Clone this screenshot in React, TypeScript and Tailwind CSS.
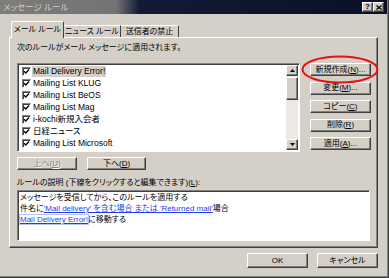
import React from 'react';

const raised =
  'bg-[#d4d0c8] border border-t-white border-l-white border-r-[#404040] border-b-[#404040] shadow-[inset_-1px_-1px_0_#808080]';
const sunken =
  'border border-t-[#808080] border-l-[#808080] border-r-white border-b-white shadow-[inset_1px_1px_0_#404040]';

const rules = [
  'Mail Delivery Error!',
  'Mailing List KLUG',
  'Mailing List BeOS',
  'Mailing List Mag',
  'i-kochi新規入会者',
  '日経ニュース',
  'Mailing List Microsoft',
  '部外者',
];

const Button = ({
  children,
  className = '',
  disabled = false,
}: {
  children: React.ReactNode;
  className?: string;
  disabled?: boolean;
}) => (
  <div
    className={`${raised} flex items-center justify-center leading-none whitespace-nowrap ${
      disabled ? 'text-[#808080] [text-shadow:1px_1px_0_#ffffff]' : 'text-black'
    } ${className}`}
  >
    {children}
  </div>
);

const Check = () => (
  <div className={`${sunken} w-[9px] h-[9px] bg-white flex items-center justify-center shrink-0`}>
    <svg width="7" height="7" viewBox="0 0 7 7">
      <path d="M1 3.2 L2.8 5 L6 1.6" stroke="#000" strokeWidth="1.4" fill="none" />
    </svg>
  </div>
);

const Arrow = ({ up }: { up?: boolean }) => (
  <div className={`${raised} w-[12px] h-[11px] flex items-center justify-center shrink-0`}>
    <svg width="5" height="3" viewBox="0 0 5 3">
      <path d={up ? 'M0 3 L2.5 0 L5 3 Z' : 'M0 0 L2.5 3 L5 0 Z'} fill="#000" />
    </svg>
  </div>
);

export default function App() {
  return (
    <div className="relative w-[389px] h-[278px] overflow-hidden border-r border-b border-[#404040] bg-[#d4d0c8] font-['Liberation_Sans','Noto_Sans_CJK_JP',sans-serif] [font-feature-settings:'palt'] text-[8px] text-black">
      <div className="flex flex-col h-full border-r border-b border-[#808080]">
        {/* title bar */}
        <div className="flex items-center h-[14px] pl-[3px] pr-[3px] bg-[linear-gradient(to_right,#7d7d7d_0%,#737373_30%,#141a36_36%,#0b1027_100%)]">
          <span className="text-[#d4d0c8] text-[8.5px] leading-none">メッセージ ルール</span>
          <div className="ml-auto flex">
            <div className={`${raised} w-[11px] h-[10px] flex items-center justify-center text-[8px] font-bold leading-none`}>?</div>
            <div className={`${raised} w-[11px] h-[10px] flex items-center justify-center`}>
              <svg width="6" height="5" viewBox="0 0 6 5">
                <path d="M0.5 0.5 L5.5 4.5 M5.5 0.5 L0.5 4.5" stroke="#000" strokeWidth="1.3" />
              </svg>
            </div>
          </div>
        </div>

        <div className="flex flex-col pl-[9px] pr-[9px] pt-[7px]">
          {/* tabs */}
          <div className="flex items-end h-[16px] pl-[2px] whitespace-nowrap">
            <div className="relative z-10 -mb-px w-[53px] h-[17px] flex items-center justify-center bg-[#d4d0c8] border-t border-l border-r border-t-white border-l-white border-r-[#404040] rounded-t-[2px] leading-none">
              メール ルール
            </div>
            <div className="w-[57px] h-[12px] flex items-center justify-center border-t border-r border-t-white border-r-[#404040] leading-none">
              ニュース ルール
            </div>
            <div className="w-[58px] h-[12px] flex items-center justify-center border-t border-r border-t-white border-r-[#404040] leading-none">
              送信者の禁止
            </div>
          </div>

          {/* panel */}
          <div className="flex flex-col h-[211px] pl-[7px] pr-[6px] border border-t-white border-l-white border-r-[#404040] border-b-[#404040] shadow-[inset_-1px_-1px_0_#808080]">
            <div className="mt-[4px] h-[12px] flex items-center leading-none">
              次のルールがメール メッセージに適用されます。
            </div>

            <div className="mt-[9px] flex gap-[10px]">
              {/* rule list */}
              <div className={`${sunken} w-[283px] h-[89px] bg-white flex overflow-hidden`}>
                <div className="flex-1 flex flex-col pt-px text-[8.5px]">
                  {rules.map((r, i) => (
                    <div key={r} className="h-[12px] shrink-0 flex items-center pl-[4px] gap-[1px]">
                      <Check />
                      <span className={`px-px leading-[11px] ${i === 0 ? 'bg-[#d4d0c8]' : ''}`}>{r}</span>
                    </div>
                  ))}
                </div>
                <div className="w-[12px] flex flex-col bg-[#ebe9e4] mt-px mr-px mb-px">
                  <Arrow up />
                  <div className={`${raised} h-[23px] mt-[1px]`} />
                  <div className="flex-1" />
                  <Arrow />
                </div>
              </div>

              {/* action buttons */}
              <div className="flex flex-col gap-[5.5px] w-[61px]">
                <Button className="h-[13px]">新規作成(<u>N</u>)...</Button>
                <Button className="h-[13px]">変更(<u>M</u>)...</Button>
                <Button className="h-[13px]">コピー(<u>C</u>)</Button>
                <Button className="h-[13px]">削除(<u>R</u>)</Button>
                <Button className="h-[13px]">適用(<u>A</u>)...</Button>
              </div>
            </div>

            <div className="mt-[5px] flex gap-[10px]">
              <Button disabled className="w-[60px] h-[13px]">上へ(<u>U</u>)</Button>
              <Button className="w-[59px] h-[13px]">下へ(<u>D</u>)</Button>
            </div>

            <div className="mt-[7px] h-[12px] flex items-center leading-none">
              ルールの説明 (下線をクリックすると編集できます)(<u>L</u>):
            </div>

            <div className={`${sunken} mt-[1px] h-[51px] bg-white pl-[2px] pt-[1px] leading-[11px] mr-px`}>
              <div>メッセージを受信してから、このルールを適用する</div>
              <div>
                件名に<span className="text-[#1f3cf2] underline">'Mail delivery' を含む場合 または 'Returned mail'</span>場合
              </div>
              <div>
                <span className="text-[#1f3cf2] underline outline outline-1 outline-[#b8c4f4]">Mail Delivery Error!</span>に移動する
              </div>
            </div>
          </div>

          {/* OK / cancel */}
          <div className="mt-[5px] flex justify-end gap-[9px]">
            <Button className="w-[61px] h-[15px]">OK</Button>
            <Button className="w-[61px] h-[15px]">キャンセル</Button>
          </div>
        </div>
      </div>

      {/* red annotation ellipse */}
      <svg className="absolute left-[301px] top-[55px]" width="78" height="29" viewBox="0 0 78 29">
        <ellipse cx="39" cy="14.5" rx="37.5" ry="13" fill="none" stroke="#e81010" strokeWidth="2" />
      </svg>
    </div>
  );
}
